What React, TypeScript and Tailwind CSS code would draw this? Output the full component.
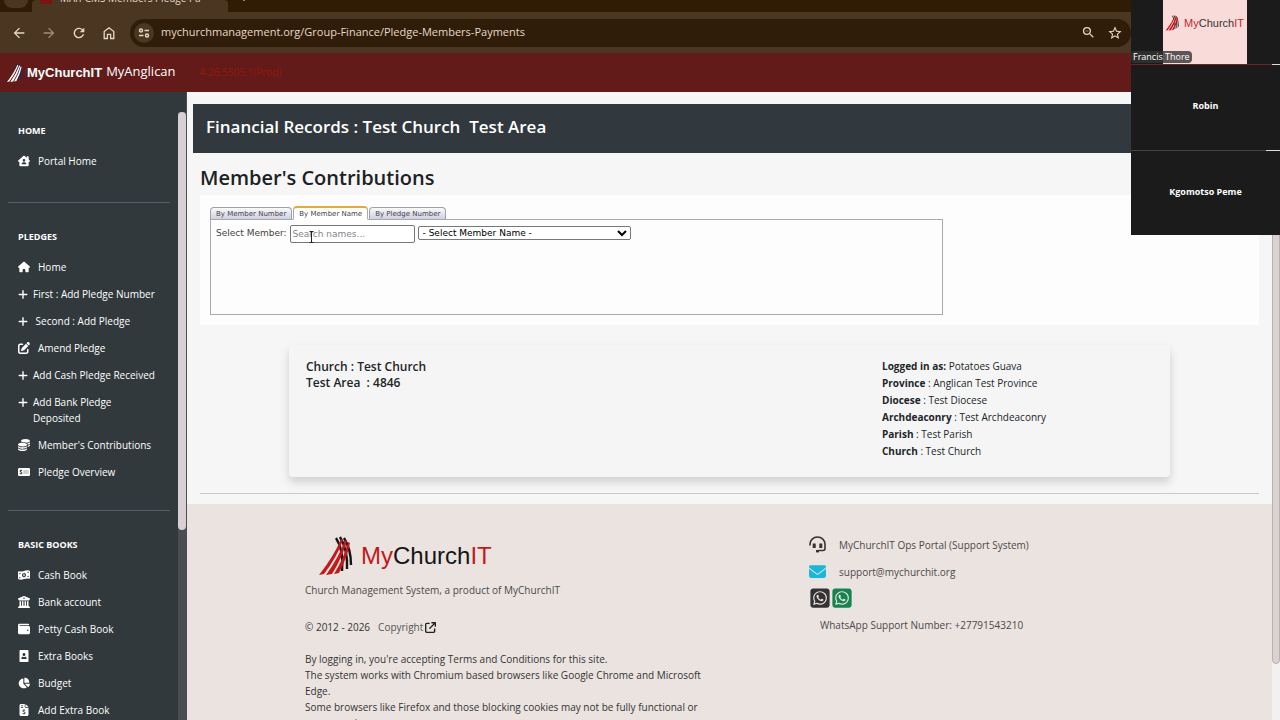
import React from 'react';
import {
  FaHouse,
  FaHouseChimneyUser,
  FaPlus,
  FaPenToSquare,
  FaCoins,
  FaMoneyCheckDollar,
  FaMoneyBill1Wave,
  FaBuildingColumns,
  FaWallet,
  FaChartPie,
  FaFileInvoiceDollar,
  FaEnvelope,
  FaSquareWhatsapp,
  FaArrowUpRightFromSquare,
} from 'react-icons/fa6';
import { FaPortrait } from 'react-icons/fa';
import { MdArrowBack, MdArrowForward, MdRefresh, MdStarBorder, MdOutlineZoomOut } from 'react-icons/md';

type NavItem = { label: string; icon: React.ReactNode; wide?: boolean };

const home: NavItem[] = [{ label: 'Portal Home', icon: <FaHouseChimneyUser />, wide: true }];

const pledges: NavItem[] = [
  { label: 'Home', icon: <FaHouse />, wide: true },
  { label: 'First : Add Pledge Number', icon: <FaPlus /> },
  { label: '\u00a0Second : Add Pledge', icon: <FaPlus /> },
  { label: 'Amend Pledge', icon: <FaPenToSquare />, wide: true },
  { label: 'Add Cash Pledge Received', icon: <FaPlus /> },
  { label: 'Add Bank Pledge Deposited', icon: <FaPlus /> },
  { label: "Member's Contributions", icon: <FaCoins />, wide: true },
  { label: 'Pledge Overview', icon: <FaMoneyCheckDollar />, wide: true },
];

const books: NavItem[] = [
  { label: 'Cash Book', icon: <FaMoneyBill1Wave />, wide: true },
  { label: 'Bank account', icon: <FaBuildingColumns />, wide: true },
  { label: 'Petty Cash Book', icon: <FaWallet />, wide: true },
  { label: 'Extra Books', icon: <FaPortrait />, wide: true },
  { label: 'Budget', icon: <FaChartPie />, wide: true },
  { label: 'Add Extra Book', icon: <FaFileInvoiceDollar />, wide: true },
];

const details = [
  ['Logged in as:', 'Potatoes Guava'],
  ['Province', ': Anglican Test Province'],
  ['Diocese', ': Test Diocese'],
  ['Archdeaconry', ': Test Archdeaconry'],
  ['Parish', ': Test Parish'],
  ['Church', ': Test Church'],
];

const tabs = ['By Member Number', 'By Member Name', 'By Pledge Number'];

function LogoMark({ className, front, back }: { className: string; front: string; back: string }) {
  return (
    <svg className={className} viewBox="0 0 34 40" fill="none">
      <path d="M17 2 Q25 14 23 35" stroke={back} strokeWidth="2.4" />
      <path d="M21 1 Q29 14 28 33" stroke={back} strokeWidth="2.4" />
      <path d="M25 2 Q32 13 32 29" stroke={back} strokeWidth="2.4" />
      <path d="M22 3 Q15 20 0 39 L5 38 Q18 21 24 4Z" fill={front} />
      <path d="M26 4 Q20 21 7 39 L13 38 Q23 22 28 5Z" fill={front} />
      <path d="M29 6 Q25 22 15 38 L20 37 Q28 22 31 7Z" fill={front} />
    </svg>
  );
}

// headset with a microphone arm
function HeadsetIcon() {
  return (
    <svg width="17" height="17" viewBox="0 0 17 17" fill="none" stroke="#333">
      <path d="M1 9.5V8a7.5 7 0 0 1 15 0v4.5a2 2 0 0 1-2 2H9.5" strokeWidth="1.6" />
      <path d="M5.2 7.5v4.5M11.8 7.5v4.5" strokeWidth="3" />
      <path d="M7 15.2h3" strokeWidth="2.4" />
    </svg>
  );
}

function NavSection({ title, items }: { title: string; items: NavItem[] }) {
  return (
    <section>
      <h2 className="mb-[14px] text-[9px] leading-4 font-bold">{title}</h2>
      <ul className="flex flex-col gap-[11px]">
        {items.map((item) => (
          <li key={item.label}>
            <a href="#" className={`flex items-start ${item.wide ? 'gap-2' : 'gap-[5px]'}`}>
              <span className={`flex h-4 shrink-0 items-center ${item.wide ? 'w-3 text-[12px]' : 'w-[10px] text-[11px]'}`}>
                {item.icon}
              </span>
              <span>{item.label}</span>
            </a>
          </li>
        ))}
      </ul>
    </section>
  );
}

function BrowserBar() {
  return (
    <header className="shrink-0 bg-[#4b3622] text-[#e6d8c8]">
      <div className="flex h-3 items-start overflow-hidden bg-[#301b05]">
        <div className="flex h-full w-8 justify-center bg-[#301b05] px-1">
          <div className="h-2 w-6 rounded-b-lg bg-[#4b3622]" />
        </div>
        <div className="flex h-full w-[196px] gap-2 rounded-t bg-[#4b3622] pl-2">
          <div className="h-1 w-3 bg-[#7c1414]" />
          <div className="-mt-2 text-[10px] leading-3 whitespace-nowrap">MAn-CMS Members Pledge Pa</div>
        </div>
        <div className="-mt-2 pl-3 text-sm leading-3">+</div>
      </div>
      <div className="flex h-[41px] items-center gap-[13px] pr-[149px] pl-[11px]">
        <div className="flex items-center gap-[14px]">
          <button aria-label="Back"><MdArrowBack size={16} /></button>
          <button aria-label="Forward" className="text-[#a08c78]"><MdArrowForward size={16} /></button>
          <button aria-label="Reload"><MdRefresh size={16} /></button>
          <button aria-label="Home">
            <svg width="16" height="16" viewBox="0 0 16 16" fill="none" stroke="currentColor" strokeWidth="1.3">
              <path d="M3.2 6.6 8 2.8l4.8 3.8v6.9H9.6V9.4H6.4v4.1H3.2z" />
            </svg>
          </button>
        </div>
        <div className="flex h-7 flex-1 items-center gap-[7px] rounded-full bg-[#301d09] pr-2 pl-1">
          <button aria-label="Site information" className="flex h-5 w-5 items-center justify-center rounded-full bg-[#4b3622]">
            <svg width="12" height="12" viewBox="0 0 12 12" fill="none" stroke="currentColor" strokeWidth="1.4">
              <circle cx="3" cy="3.5" r="1.5" />
              <path d="M6.5 3.5h4.5M1 8.5h4.5" />
              <circle cx="9" cy="8.5" r="1.5" />
            </svg>
          </button>
          <input
            aria-label="Address"
            className="min-w-0 flex-1 bg-transparent text-[11px] outline-none"
            defaultValue="mychurchmanagement.org/Group-Finance/Pledge-Members-Payments"
          />
          <button aria-label="Zoom out"><MdOutlineZoomOut size={15} /></button>
          <button aria-label="Bookmark" className="ml-1"><MdStarBorder size={16} /></button>
        </div>
      </div>
    </header>
  );
}

function SiteHeader() {
  return (
    <div className="flex h-[39px] shrink-0 items-center bg-[#621b19] pl-[7px] text-white">
      <LogoMark className="h-5 w-4" front="#fff" back="#2a2a55" />
      <span className="ml-1 font-['Liberation_Sans',sans-serif] text-[13px] font-bold">MyChurchIT</span>
      <a href="#" className="ml-1 pb-1 text-[13px] leading-5">MyAnglican</a>
      <span className="ml-6 text-[10px] text-[#971610]">4.26.5505.1(Prod)</span>
    </div>
  );
}

function Sidebar() {
  return (
    <aside className="flex w-[187px] shrink-0 overflow-hidden bg-[#31393c] text-white">
      <nav className="min-w-0 flex-1 pt-[31px] pl-2 text-[10px] leading-4">
        <div className="pl-[10px]"><NavSection title="HOME" items={home} /></div>
        <hr className="mt-[33px] mr-2 mb-[26px] border-[#566064]" />
        <div className="pr-5 pl-[10px]"><NavSection title="PLEDGES" items={pledges} /></div>
        <hr className="mt-[30px] mr-2 mb-[26px] border-[#566064]" />
        <div className="pl-[10px]"><NavSection title="BASIC BOOKS" items={books} /></div>
      </nav>
      <div className="w-[9px] bg-[#4a4e54] pr-px">
        <div className="h-5 bg-[#31393c]" />
        <div className="h-[418px] rounded-full bg-[#d8d0d4]" />
      </div>
    </aside>
  );
}

function MemberPanel() {
  return (
    <div className="bg-[#fdfdfd] px-[10px] pt-3 pb-[10px] font-['DejaVu_Sans',sans-serif] text-[#444]">
      <div className="flex h-3 items-end gap-px text-[7px] leading-[10px]" role="tablist">
        {tabs.map((tab, i) =>
          i === 1 ? (
            <button key={tab} role="tab" aria-selected="true" className="relative z-10 -mb-px h-[14px] rounded-t-sm border border-t-2 border-[#aaa] border-t-[#e0ac3c] border-b-white bg-white px-[5px]">
              {tab}
            </button>
          ) : (
            <button key={tab} role="tab" aria-selected="false" className="h-3 rounded-t-sm border border-b-0 border-[#a0a0ac] bg-linear-to-b from-[#fafafa] to-[#cfcfe4] px-[5px]">
              {tab}
            </button>
          )
        )}
      </div>
      <div className="flex h-24 w-[733px] max-w-full items-start gap-[3px] border border-[#aaa] pt-[5px] pl-[5px] text-[9px]">
        <label htmlFor="member-search" className="leading-[17px]">Select Member:</label>
        <input
          id="member-search"
          placeholder="Search names..."
          className="h-[18px] w-[125px] cursor-text rounded-xs border border-[#777] bg-white px-[2px] placeholder:text-[#858585]"
        />
        <select aria-label="Member name" className="mt-px h-[14px] w-[213px] rounded-xs border border-[#777] bg-white text-black">
          <option>- Select Member Name -</option>
        </select>
      </div>
    </div>
  );
}

function ChurchCard() {
  return (
    <div className="mx-[89px] mt-5 flex h-[132px] justify-between rounded bg-[#f5f5f5] px-[17px] pt-[13px] text-[#212529] shadow-[0_5px_10px_rgba(0,0,0,0.16)]">
      <div className="pt-px text-[12px] leading-4 font-semibold">
        <p>Church : Test Church</p>
        <p className="whitespace-pre">Test Area  : 4846</p>
      </div>
      <ul className="w-[271px] text-[10px] leading-[17px]">
        {details.map(([name, value]) => (
          <li key={name}><b>{name}</b> {value}</li>
        ))}
      </ul>
    </div>
  );
}

function Footer() {
  return (
    <footer className="flex flex-1 bg-[#ebe3e0] pt-8 pl-[118px] text-[10px] leading-4 text-[#4c4948]">
      <div className="w-[504px] shrink-0">
        <div className="flex h-10 items-center gap-2 pl-[14px]">
          <LogoMark className="h-10 w-[34px]" front="#c11a1c" back="#161616" />
          <span className="font-['Liberation_Sans',sans-serif] text-[24px] text-[#161616]">
            <span className="text-[#c11a1c]">My</span>Church<span className="text-[#c11a1c]">IT</span>
          </span>
        </div>
        <p className="mt-[6px]">Church Management System, a product of MyChurchIT</p>
        <p className="mt-[21px] flex items-center gap-2 text-[#333]">
          <span>© 2012 - 2026</span>
          <a href="#" className="flex items-center gap-[2px] text-[#555]">
            Copyright <FaArrowUpRightFromSquare size={11} className="text-[#222]" />
          </a>
        </p>
        <p className="mt-4 w-[410px] text-[#333]">
          By logging in, you're accepting Terms and Conditions for this site.<br />
          The system works with Chromium based browsers like Google Chrome and Microsoft Edge.<br />
          Some browsers like Firefox and those blocking cookies may not be fully functional or unresponsive.
        </p>
      </div>
      <div>
        <a href="#" className="flex items-center gap-[13px]">
          <HeadsetIcon /> MyChurchIT Ops Portal (Support System)
        </a>
        <a href="#" className="mt-[10px] flex items-center gap-[13px]">
          <FaEnvelope size={17} className="text-[#19b7dc]" /> support@mychurchit.org
        </a>
        <div className="mt-[7px] flex">
          <a href="#" aria-label="WhatsApp"><FaSquareWhatsapp size={22} className="text-[#333]" /></a>
          <a href="#" aria-label="WhatsApp business"><FaSquareWhatsapp size={22} className="text-[#178350]" /></a>
        </div>
        <p className="mt-2 pl-[11px]">WhatsApp Support Number: +27791543210</p>
      </div>
    </footer>
  );
}

function CallPanel() {
  return (
    <div className="absolute top-0 right-0 flex h-[235px] w-[149px] flex-col bg-[#1b1b1b] text-[9px] font-bold text-white">
      <div className="relative flex h-16 justify-center pr-[2px]">
        <div className="flex h-full w-[84px] items-start justify-center gap-1 bg-[#f9dcda] pt-[15px]">
          <LogoMark className="h-4 w-[15px] shrink-0" front="#c11a1c" back="#333" />
          <span className="font-['Liberation_Sans',sans-serif] text-[11px] leading-4 font-normal text-[#333]">
            <span className="text-[#c8262c]">My</span>Church<span className="text-[#c8262c]">IT</span>
          </span>
        </div>
        <span className="absolute bottom-px left-0 rounded-sm bg-[#333]/80 px-[2px] text-[9px] leading-3 font-normal">
          Francis Thore
        </span>
      </div>
      <div className="flex h-[86px] items-center justify-center border-t border-[#6a2422] pb-[3px]">Robin</div>
      <div className="flex flex-1 items-center justify-center border-t border-[#444] pb-[3px]">Kgomotso Peme</div>
      {/* ends of the tile dividers */}
      <div className="absolute top-16 right-0 h-px w-2 bg-[#ddd]" />
      <div className="absolute top-[150px] right-0 h-px w-[14px] bg-[#ddd]" />
    </div>
  );
}

// text pointer resting over the search box
function Pointer() {
  return (
    <svg className="pointer-events-none absolute top-[231px] left-[308px]" width="7" height="12" viewBox="0 0 7 12" fill="none" stroke="#222">
      <path d="M1.5 .5h4M3.5 .5v11M1.5 11.5h4" />
    </svg>
  );
}

function App() {
  return (
    <div className="relative flex h-screen flex-col overflow-hidden bg-[#f6f6f6] font-['Open_Sans','Noto_Sans',sans-serif]">
      <BrowserBar />
      <SiteHeader />
      <div className="flex min-h-0 flex-1">
        <Sidebar />
        <main className="flex min-w-0 flex-1 flex-col overflow-hidden">
          <div className="mt-3 ml-[6px] shrink-0 bg-[#31393e] pb-1 pl-[13px] text-[17px] leading-[45px] font-semibold whitespace-pre text-white">
            Financial Records : Test Church  Test Area
          </div>
          <div className="mr-[13px] ml-[13px] shrink-0">
            <h1 className="pt-[10px] pb-[2px] text-[20px] leading-[30px] font-semibold text-[#1b2124]">Member's Contributions</h1>
            <MemberPanel />
            <ChurchCard />
            <hr className="mt-4 mb-[10px] border-[#c8cbcc]" />
          </div>
          <Footer />
        </main>
        <div className="w-2 shrink-0 bg-[#f3f1ef]">
          <div className="h-[572px] rounded-full border border-[#b9b1b0] bg-[#dad2d1]" />
        </div>
      </div>
      <Pointer />
      <CallPanel />
    </div>
  );
}

export default App;
